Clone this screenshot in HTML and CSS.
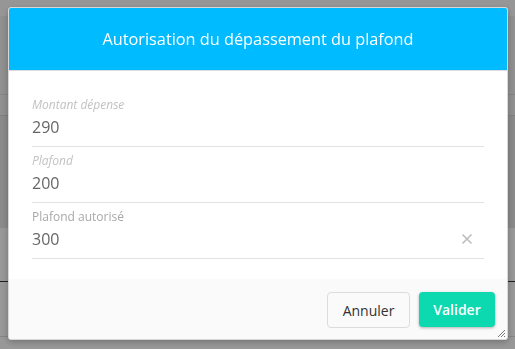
FILE: index.html
```html
<!DOCTYPE html>
<html lang="fr">
<head>
<meta charset="utf-8">
<link rel="stylesheet" href="styles.css">
</head>
<body>
<div class="page">
  <div class="page-top"></div>
  <div class="page-mid">
    <div class="page-row"></div>
    <div class="page-row dark"></div>
  </div>
  <div class="page-low">
    <div class="page-gap"></div>
    <div class="page-line"></div>
    <div class="page-gap2"></div>
    <div class="page-line light"></div>
  </div>
</div>
<div class="overlay"></div>
<div class="dialog">
  <div class="dialog-header">Autorisation du dépassement du plafond</div>
  <div class="dialog-body">
    <div class="field">
      <div class="label italic">Montant dépense</div>
      <div class="value">290</div>
    </div>
    <div class="field">
      <div class="label italic">Plafond</div>
      <div class="value">200</div>
    </div>
    <div class="field">
      <div class="label">Plafond autorisé</div>
      <div class="value-row">
        <div class="value">300</div>
        <svg class="clear" width="12" height="12" viewBox="0 0 12 12"><path d="M1.5 1.5 L10.5 10.5 M10.5 1.5 L1.5 10.5" stroke="#bdbdbd" stroke-width="1.6" fill="none"/></svg>
      </div>
    </div>
  </div>
  <div class="dialog-footer">
    <button class="btn btn-cancel">Annuler</button>
    <button class="btn btn-ok">Valider</button>
  </div>
  <svg class="resize" width="10" height="10" viewBox="0 0 10 10"><path d="M9 2 L2 9 M9 5 L5 9 M9 8 L8 9" stroke="#777" stroke-width="1" fill="none"/></svg>
</div>
</body>
</html>
```
FILE: styles.css
```css
* { box-sizing: border-box; }
html, body { margin: 0; padding: 0; }
body {
  width: 515px;
  height: 349px;
  overflow: hidden;
  font-family: "Open Sans", "Liberation Sans", sans-serif;
  background: #f4f4f4;
}
.page { display: flex; flex-direction: column; height: 349px; }
.page-top { height: 16px; background: #fbfbfb; }
.page-mid { height: 212px; background: #f0f0f0; padding-top: 78px; }
.page-row { height: 21px; border-top: 1px solid #dcdcdc; }
.page-row.dark { height: 113px; background: #e6e6e6; border-top: 1px solid #d6d6d6; }
.page-low { flex: 1; background: #fdfdfd; display: flex; flex-direction: column; }
.page-gap { height: 53px; }
.page-line { height: 1px; background: #333; }
.page-gap2 { height: 54px; }
.page-line.light { background: #dedede; }
.overlay {
  position: fixed; inset: 0;
  background: rgba(0, 0, 0, 0.4);
}
.dialog {
  position: fixed;
  left: 8px; top: 7px;
  width: 500px; height: 333px;
  background: #fff;
  border: 1px solid #d8d8d8;
  border-radius: 3px;
  box-shadow: 0 2px 6px rgba(0,0,0,0.25);
  display: flex; flex-direction: column;
  overflow: hidden;
}
.dialog-header {
  height: 63px;
  background: #00bbff;
  color: #fff;
  font-size: 16.3px;
  display: flex; align-items: center; justify-content: center;
  border-bottom: 1px solid #dcdcdc;
  padding-bottom: 1px;
}
.dialog-body {
  padding: 20px 23px 0 23px;
  flex: 1;
}
.field {
  height: 56px;
  padding-top: 7px;
  border-bottom: 1px solid #e2e2e2;
}
.label {
  font-size: 12px;
  line-height: 14px;
  color: #a8a8a8;
}
.label.italic { font-style: italic; color: #c2c2c2; }
.value {
  font-size: 16px;
  line-height: 22px;
  margin-top: 4px;
  color: #666;
}
.value-row { display: flex; justify-content: space-between; align-items: center; }
.clear { margin-top: 4px; margin-right: 11px; }
.dialog-footer {
  height: 60px;
  background: #fafafa;
  display: flex; justify-content: flex-end; align-items: flex-start;
  padding: 13px 12px 0 0;
  gap: 9px;
}
.btn {
  font-family: "Open Sans", "Liberation Sans", sans-serif;
  font-size: 14px;
  height: 36px;
  border-radius: 4px;
  cursor: pointer;
}
.btn-cancel {
  width: 83px;
  background: #fafafa;
  color: #333;
  border: 1px solid #dcdcdc;
}
.btn-ok {
  width: 76px;
  height: 35px;
  background: #0cd9b0;
  color: #fff;
  font-weight: 600;
  border: none;
  box-shadow: 0 1px 3px rgba(0,0,0,0.3);
}
.resize { position: absolute; right: 1px; bottom: 1px; }
```
